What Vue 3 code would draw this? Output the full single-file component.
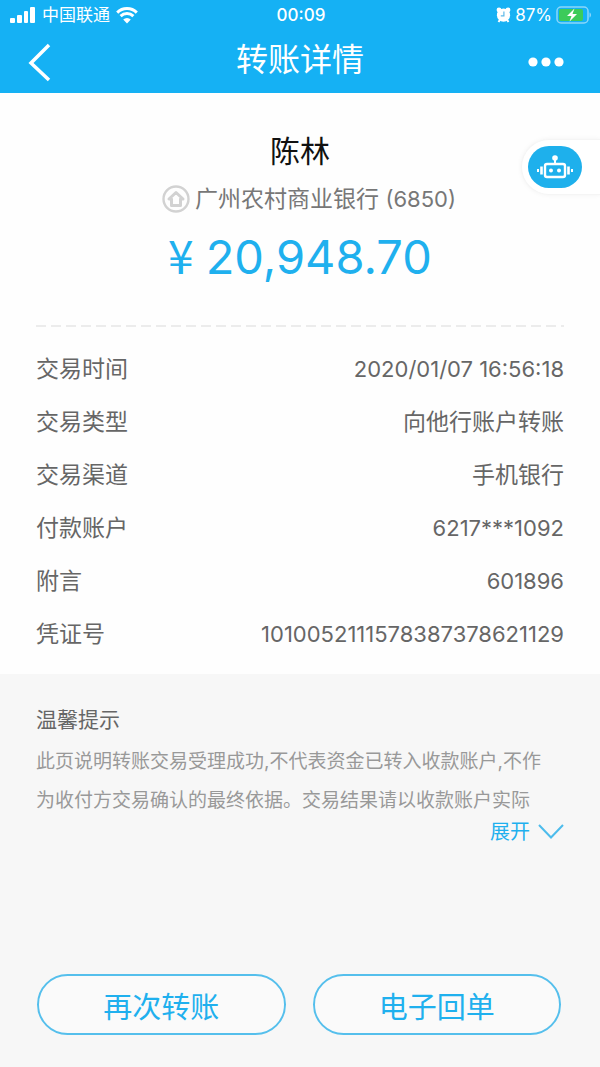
<template>
  <div class="page">
    <header class="header">
      <div class="status-bar">
        <div class="status-side">
          <svg class="signal" width="26" height="17" viewBox="0 0 26 17" aria-hidden="true">
            <rect x="0" y="11" width="5" height="5" rx="1" />
            <rect x="7" y="8" width="5" height="8" rx="1" />
            <rect x="14" y="4" width="4" height="12" rx="1" />
            <rect x="20" y="0" width="5" height="16" rx="1" />
          </svg>
          <span class="carrier">中国联通</span>
          <svg class="wifi" width="22" height="17" viewBox="0 0 22 17" aria-hidden="true">
            <path d="M1.2 5.6a14 14 0 0 1 19.6 0" />
            <path d="M4.6 9.2a9.2 9.2 0 0 1 12.8 0" />
            <path class="wifi-dot" d="M11 16.4l-3.8-3.8a5.4 5.4 0 0 1 7.6 0z" />
          </svg>
        </div>
        <span class="clock">00:09</span>
        <div class="status-side right">
          <svg width="15" height="16" viewBox="0 0 15 16" aria-hidden="true">
            <circle cx="3" cy="3" r="2.4" fill="#fff" />
            <circle cx="12" cy="3" r="2.4" fill="#fff" />
            <path d="M2.5 15l2-3M12.5 15l-2-3" stroke="#fff" stroke-width="2" />
            <circle cx="7.5" cy="8.2" r="6.6" fill="#fff" />
            <path d="M7.9 4.4v4.4H4.8" fill="none" stroke="#5fb9e8" stroke-width="1.2" />
          </svg>
          <span class="percent">87%</span>
          <svg width="36" height="18" viewBox="0 0 36 18" aria-hidden="true">
            <rect x="1" y="1" width="31" height="16" rx="4" fill="none" stroke="#8bd6fa" stroke-width="1.5" />
            <rect x="3" y="3" width="24" height="12" rx="2" fill="#3ccb5a" />
            <path d="M33.5 6.5c2 .6 2 4.4 0 5z" fill="#8bd6fa" />
            <path d="M18.5 2.5L11 10h4.5l-2 5.5L21 8h-4.5z" fill="#fff" />
          </svg>
        </div>
      </div>
      <nav class="nav-bar">
        <button class="nav-btn" type="button" aria-label="返回">
          <svg width="24" height="40" viewBox="0 0 24 40">
            <path d="M21 3L3 21l18 17" fill="none" stroke="#fff" stroke-width="3.5" />
          </svg>
        </button>
        <h1>转账详情</h1>
        <button class="nav-btn more" type="button" aria-label="更多">
          <svg width="36" height="10" viewBox="0 0 36 10" fill="#fff">
            <circle cx="5" cy="5" r="4.6" />
            <circle cx="18" cy="5" r="4.6" />
            <circle cx="31" cy="5" r="4.6" />
          </svg>
        </button>
      </nav>
    </header>

    <main class="detail">
      <button class="robot" type="button" aria-label="智能客服">
        <span class="robot-face">
          <svg width="38" height="24" viewBox="0 0 38 24" fill="none" stroke="#fff">
            <circle cx="19" cy="3" r="2.8" fill="#fff" stroke="none" />
            <path d="M19 4v5" stroke-width="2" />
            <rect x="9" y="9" width="20" height="13" rx="2" stroke-width="2.4" />
            <circle cx="15" cy="15.5" r="2" fill="#fff" stroke="none" />
            <circle cx="23" cy="15.5" r="2" fill="#fff" stroke="none" />
            <path d="M5.5 11.5v8M32.5 11.5v8" stroke-width="2.6" />
            <path d="M2 14v3M36 14v3" stroke-width="2" />
          </svg>
        </span>
      </button>

      <section class="payee">
        <h2>陈林</h2>
        <p class="bank">
          <svg width="28" height="28" viewBox="0 0 28 28" fill="none" stroke="#d2d2d2" aria-hidden="true">
            <circle cx="14" cy="14" r="12.5" stroke-width="2.4" />
            <path d="M14 7.5L7 14h2.5v6.500h9V14H21z" stroke-width="3" stroke-linejoin="round" />
          </svg>
          <span>广州农村商业银行 <span class="num">(6850)</span></span>
        </p>
        <p class="amount"><span class="yen">¥</span>20,948.70</p>
      </section>

      <dl class="rows">
        <div v-for="row in rows" :key="row.label" class="row">
          <dt>{{ row.label }}</dt>
          <dd :class="{ num: row.numeric }">{{ row.value }}</dd>
        </div>
      </dl>
    </main>

    <section class="tips">
      <h3>温馨提示</h3>
      <p>此页说明转账交易受理成功,不代表资金已转入收款账户,不作<br />为收付方交易确认的最终依据。交易结果请以收款账户实际</p>
      <button class="expand" type="button" :aria-expanded="isExpanded" @click="toggleExpand">
        展开
        <svg :class="{ flipped: isExpanded }" width="26" height="16" viewBox="0 0 26 16">
          <path d="M1 1l12 12.5L25 1" fill="none" stroke="#4dbcec" stroke-width="2" />
        </svg>
      </button>
    </section>

    <footer class="actions">
      <button type="button">再次转账</button>
      <button type="button">电子回单</button>
    </footer>
  </div>
</template>

<script setup>
import { ref } from 'vue'

const rows = [
  { label: '交易时间', value: '2020/01/07 16:56:18', numeric: true },
  { label: '交易类型', value: '向他行账户转账' },
  { label: '交易渠道', value: '手机银行' },
  { label: '付款账户', value: '6217***1092', numeric: true },
  { label: '附言', value: '601896', numeric: true },
  { label: '凭证号', value: '1010052111578387378621129', numeric: true },
]

const isExpanded = ref(false)

function toggleExpand() {
  isExpanded.value = !isExpanded.value
}
</script>

<style>
body {
  margin: 0;
  background: #f7f7f7;
}
</style>

<style scoped>
.page {
  display: flex;
  flex-direction: column;
  min-height: 100vh;
  background: #f7f7f7;
  color: #666;
  font-family: Inter, 'Noto Sans CJK SC', sans-serif;
}
h1,
h2,
h3,
p,
dl,
dd {
  margin: 0;
  font-weight: 400;
}
button {
  padding: 0;
  border: none;
  background: none;
  font-family: inherit;
  cursor: pointer;
}
svg {
  display: block;
  flex: none;
}

.header {
  background: #15b1f4;
  color: #fff;
}
.status-bar {
  display: flex;
  align-items: center;
  height: 30px;
  padding: 0 8px 0 10px;
  font-size: 17px;
  line-height: 30px;
}
.status-side {
  display: flex;
  flex: 1;
  align-items: center;
  gap: 6px;
}
.status-side.right {
  justify-content: flex-end;
  gap: 4px;
}
.signal {
  fill: #fff;
}
.wifi {
  fill: none;
  stroke: #fff;
  stroke-width: 3;
}
.wifi-dot {
  fill: #fff;
  stroke: none;
}
.clock {
  font-weight: 500;
}
.nav-bar {
  display: flex;
  align-items: center;
  justify-content: space-between;
  height: 63px;
  padding: 0 36px 0 28px;
}
.nav-btn {
  width: 44px;
}
.nav-btn.more {
  width: 36px;
}
.nav-bar h1 {
  align-self: flex-start;
  font-size: 32px;
  line-height: 60px;
}

.detail {
  position: relative;
  padding: 36px 36px 13px;
  background: #fefefe;
}
.robot {
  position: absolute;
  top: 46px;
  right: 0;
  padding: 6px 18px 6px 6px;
  border: 1px solid #f5f5f5;
  border-right: none;
  border-radius: 28px 0 0 28px;
  background: #fff;
  box-shadow: 0 0 5px #f3f3f3;
}
.robot-face {
  display: flex;
  align-items: center;
  justify-content: center;
  width: 54px;
  height: 42px;
  border-radius: 21px;
  background: #1eb0ec;
}
.payee {
  display: flex;
  flex-direction: column;
  align-items: center;
  padding-bottom: 38px;
}
.payee h2 {
  color: #111;
  font-size: 30px;
  line-height: 44px;
}
.bank {
  display: flex;
  align-items: center;
  gap: 5px;
  margin-top: 10px;
  padding-left: 18px;
  color: #777;
  font-size: 23px;
  line-height: 32px;
}
.num {
  font-size: 22px;
}
.amount {
  margin-top: 12px;
  color: #1fb0ee;
  font-size: 47px;
  line-height: 60px;
}
.yen {
  margin-right: 12px;
  font-family: 'Noto Sans CJK SC', sans-serif;
  font-size: 46px;
  line-height: 1;
}
.rows {
  padding-top: 18px;
  background: repeating-linear-gradient(to right, #ececec 0 10px, transparent 10px 15px) top / 100% 2px no-repeat;
}
.row {
  display: flex;
  justify-content: space-between;
  font-size: 23px;
  line-height: 53px;
}

.tips {
  display: flex;
  flex-direction: column;
  padding: 31px 36px;
}
.tips h3 {
  font-size: 21px;
  line-height: 30px;
}
.tips p {
  margin-top: 7px;
  color: #999;
  font-size: 19px;
  line-height: 39px;
}
.expand {
  display: flex;
  align-items: center;
  gap: 8px;
  margin-left: auto;
  color: #1fb0ee;
  font-size: 20px;
  line-height: 24px;
}
.expand .flipped {
  transform: rotate(180deg);
}

.actions {
  display: flex;
  gap: 27px;
  margin-top: auto;
  padding: 0 39px 32px 37px;
}
.actions button {
  flex: 1;
  height: 61px;
  border: 2px solid #55bfec;
  border-radius: 31px;
  background: #fafafa;
  color: #1fb0ee;
  font-size: 29px;
}
</style>
